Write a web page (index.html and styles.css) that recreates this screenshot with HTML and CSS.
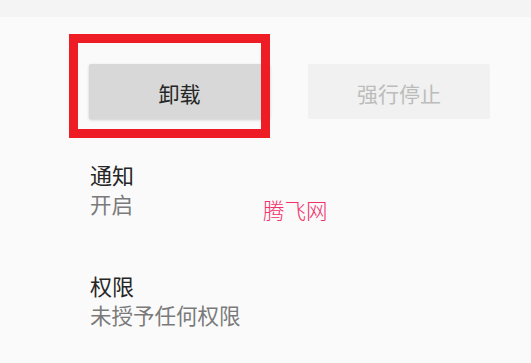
FILE: index.html
```html
<!DOCTYPE html>
<html lang="zh-CN">
<head>
<meta charset="utf-8">
<link rel="stylesheet" href="styles.css">
</head>
<body>
<div class="page">
  <div class="topbar"></div>
  <div class="actions">
    <div class="btn btn-primary">卸载</div>
    <div class="btn btn-disabled">强行停止</div>
  </div>
  <div class="list">
    <div class="item">
      <div class="title">通知</div>
      <div class="sub">开启</div>
    </div>
    <div class="item">
      <div class="title">权限</div>
      <div class="sub">未授予任何权限</div>
    </div>
  </div>
  <div class="highlight"></div>
  <div class="watermark">腾飞网</div>
</div>
</body>
</html>
```
FILE: styles.css
```css
html, body {
  margin: 0;
  padding: 0;
}
body {
  background: #fafafa;
  font-family: "Noto Sans CJK SC", "Noto Sans", sans-serif;
  width: 531px;
  height: 363px;
  overflow: hidden;
}
.page {
  position: relative;
  width: 531px;
  height: 363px;
}
.topbar {
  height: 17px;
  background: #f4f4f4;
}
.actions {
  display: flex;
  gap: 38px;
  padding-left: 89px;
  margin-top: 47px;
}
.btn {
  width: 181px;
  height: 55px;
  border-radius: 2px;
  display: flex;
  align-items: center;
  justify-content: center;
  font-size: 21px;
  padding-top: 2px;
  box-sizing: border-box;
}
.btn-primary {
  background: #d7d8d7;
  color: #262626;
  box-shadow: 0 1px 3px rgba(0,0,0,0.18);
}
.btn-disabled {
  width: 182px;
  background: #f0f1f0;
  color: #bcbcbc;
}
.list {
  padding-left: 90px;
  margin-top: 40px;
}
.item {
  margin-bottom: 51px;
}
.title {
  font-size: 22px;
  line-height: 30px;
  color: #262626;
}
.sub {
  font-size: 21.5px;
  line-height: 30px;
  color: #7a7a7a;
}
.highlight {
  position: absolute;
  left: 69px;
  top: 34px;
  width: 201px;
  height: 104px;
  box-sizing: border-box;
  border: 9px solid #ee1c25;
}
.watermark {
  position: absolute;
  left: 263px;
  top: 195px;
  font-size: 21.5px;
  line-height: 30px;
  font-weight: 300;
  color: #f2306a;
}
```
